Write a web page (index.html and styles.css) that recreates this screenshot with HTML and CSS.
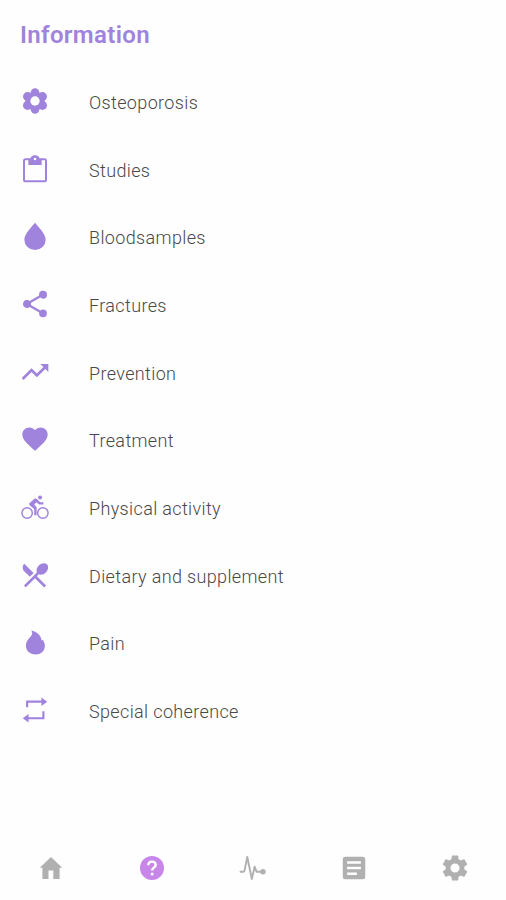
FILE: index.html
```html
<!DOCTYPE html>
<html lang="en">
<head>
  <meta charset="UTF-8" />
  <meta name="viewport" content="width=device-width, initial-scale=1.0">
  <title>Information</title>
  <link rel="stylesheet" href="styles.css">
</head>
<body>

  <main class="content">
    <h1>Information</h1>

    <ul class="menu">
      <li>
        <svg viewBox="0 0 24 24"><circle cx="12" cy="5.600" r="3.200"/><circle cx="17.600" cy="8.700" r="3.400"/><circle cx="17.600" cy="15.300" r="3.400"/><circle cx="12" cy="18.400" r="3.200"/><circle cx="6.400" cy="15.300" r="3.400"/><circle cx="6.400" cy="8.700" r="3.400"/><circle cx="12" cy="12" r="7.200"/><circle class="hole" cx="12" cy="12" r="3.500"/></svg>
        <span>Osteoporosis</span>
      </li>
      <li>
        <svg viewBox="0 0 24 24"><path transform="translate(0 .5)" d="M19 3.500h-3.600A3.500 3.300 0 0 0 12 1.200a3.500 3.300 0 0 0-3.400 2.300H5a2 2 0 0 0-2 2V19.500a2 2 0 0 0 2 2h14a2 2 0 0 0 2-2V5.500a2 2 0 0 0-2-2zm-7-.5a1 1 0 1 1 0 2 1 1 0 0 1 0-2zM19.500 20h-15V5H7v3.500h10V5h2.500z"/></svg>
        <span>Studies</span>
      </li>
      <li>
        <svg viewBox="0 0 24 24"><path d="M12 2C9.200 5.600 4 10.300 4 14.800a8 7.700 0 0 0 16 0C20 10.300 14.800 5.600 12 2z"/></svg>
        <span>Bloodsamples</span>
      </li>
      <li>
        <svg viewBox="0 0 24 24"><path d="M18 16.080c-.76 0-1.440.3-1.960.77L8.910 12.700c.05-.23.090-.46.090-.7s-.040-.47-.090-.7l7.050-4.110c.54.5 1.250.81 2.040.81a3 3 0 1 0-3-3c0 .24.040.47.090.7L8.040 9.810A3 3 0 1 0 6 15c.79 0 1.500-.31 2.040-.81l7.120 4.160c-.050.21-.080.43-.080.65a2.920 2.920 0 1 0 2.920-2.920z"/></svg>
        <span>Fractures</span>
      </li>
      <li>
        <svg viewBox="0 0 24 24"><path d="M16 6l2.290 2.290-4.880 4.880-4-4L2 16.590 3.410 18l6-6 4 4 6.300-6.290L22 12V6z"/></svg>
        <span>Prevention</span>
      </li>
      <li>
        <svg viewBox="0 0 24 24"><path transform="translate(.6 .6) scale(.95)" d="M12 21.350l-1.450-1.320C5.400 15.360 2 12.280 2 8.500 2 5.420 4.420 3 7.500 3c1.740 0 3.410.81 4.500 2.090C13.090 3.810 14.760 3 16.500 3 19.580 3 22 5.420 22 8.500c0 3.780-3.400 6.860-8.550 11.540z"/></svg>
        <span>Treatment</span>
      </li>
      <li>
        <svg viewBox="0 0 24 24"><g class="line"><circle cx="6.100" cy="16.500" r="3.900"/><circle cx="17.900" cy="16.500" r="3.900"/></g><circle cx="15.800" cy="4.900" r="1.500"/><path d="M8 9l3.600-3.100c.6-.5 1.400-.4 1.900.1l2.300 2.400h2.500v1.700h-3.300l-1.900-1.700-1.700 1.800 1.800 2v6h-1.800v-4.700l-3.200-2.600c-.7-.6-.8-1.300-.2-1.900z"/></svg>
        <span>Physical activity</span>
      </li>
      <li>
        <svg viewBox="0 0 24 24"><path d="M8.100 13.340l2.830-2.830L3.910 3.500a4 4 0 0 0 0 5.660zM14.880 11.530c1.530.71 3.680.21 5.270-1.380 1.910-1.910 2.280-4.650.81-6.120-1.460-1.460-4.200-1.100-6.120.81-1.590 1.590-2.090 3.740-1.380 5.270L3.700 19.870l1.410 1.410L12 14.410l6.880 6.880 1.410-1.410L13.410 13z"/></svg>
        <span>Dietary and supplement</span>
      </li>
      <li>
        <svg viewBox="0 0 24 24"><path d="M9.200 2.800c4.600 1 7.400 3.800 7.700 7.400l.9-.4c.9 1.300 1.700 2.900 1.600 4.800-.3 3.900-3.200 6.200-6.800 6.200-4.500 0-7.400-2.500-7.400-6.500 0-3 1.300-4.500 2.900-6.300C9.900 6.100 10.500 4.900 9.200 2.800z" transform="translate(0 .6)"/></svg>
        <span>Pain</span>
      </li>
      <li>
        <svg viewBox="0 0 24 24"><path transform="translate(0 .3)" d="M5.300 9.700V4.600h11.500V2.400l4.400 3.100-4.400 3.200V6.200H6.900v3.500zM19.100 12.600v6.100H7.200V21l-4.400-3.200 4.400-3.100v2.400h10.300v-4.500z"/></svg>
        <span>Special coherence</span>
      </li>
    </ul>
  </main>

  <nav class="tabs">
    <a>
      <svg viewBox="0 0 30 30"><path d="M15 4L3.800 14.700h2.600V26h6.100v-8.500h4.800V26h6.300V14.700h2.600z"/></svg>
    </a>
    <a class="active">
      <svg viewBox="0 0 30 30"><circle cx="15" cy="15" r="12"/><path class="mark" d="M11.300 12.300c0-2.300 1.500-3.700 3.700-3.700s3.700 1.400 3.700 3.300c0 2.600-3.600 2.700-3.600 5.700"/><circle class="hole" cx="15.100" cy="20.900" r="1.500"/></svg>
    </a>
    <a>
      <svg viewBox="0 0 30 30"><path class="pulse" d="M2.500 18.800h2.800c.7 0 1-.3 1.200-1L9.300 4l4.500 22 2.800-12.300 2 5.100h5"/><circle cx="25" cy="18.800" r="2.700"/></svg>
    </a>
    <a>
      <svg viewBox="0 0 24 24"><path fill-rule="evenodd" d="M5 3h14a2 2 0 0 1 2 2v14a2 2 0 0 1-2 2H5a2 2 0 0 1-2-2V5a2 2 0 0 1 2-2zM6.500 6.500v2h11v-2zM6.500 11v2h11v-2zM6.500 15.500v2h7.800v-2z"/></svg>
    </a>
    <a>
      <svg viewBox="0 0 24 24"><path fill-rule="evenodd" d="M19.430 12.980c.04-.32.070-.64.070-.98s-.03-.66-.07-.98l2.110-1.650c.19-.15.24-.42.120-.64l-2-3.460a.5.5 0 0 0-.61-.22l-2.490 1a7.300 7.300 0 0 0-1.690-.98l-.38-2.650A.49.49 0 0 0 14 2h-4a.49.49 0 0 0-.49.420l-.38 2.650c-.61.25-1.170.59-1.690.98l-2.490-1a.49.49 0 0 0-.61.220l-2 3.460c-.13.22-.07.49.120.640l2.110 1.650c-.04.320-.07.650-.07.980s.03.660.070.980l-2.110 1.650a.5.5 0 0 0-.12.640l2 3.460c.12.220.39.300.610.220l2.490-1c.52.400 1.080.730 1.690.980l.38 2.650c.03.240.24.420.490.420h4c.25 0 .46-.18.490-.42l.38-2.650c.61-.25 1.170-.59 1.690-.98l2.490 1c.23.090.49 0 .61-.22l2-3.460a.5.5 0 0 0-.12-.64zM12 15.600a3.600 3.600 0 1 1 0-7.200 3.600 3.600 0 0 1 0 7.200z"/></svg>
    </a>
  </nav>

</body>
</html>
```
FILE: styles.css
```css
body {
  margin: 0;
  height: 900px;
  display: flex;
  flex-direction: column;
  font-family: Roboto, sans-serif;
  background: #fefefe;
  color: #484848;
}
.content {
  flex: 1;
}
h1 {
  margin: 20px 0 0 20px;
  font-size: 24px;
  line-height: 30px;
  font-weight: 600;
  letter-spacing: 0.35px;
  color: #a083dc;
}
.menu {
  margin: 17px 0 0;
  padding: 0;
  list-style: none;
}
.menu li {
  display: flex;
  align-items: center;
  height: 67.7px;
  padding-left: 19px;
  font-size: 18px;
  font-weight: 350;
  letter-spacing: 0.36px;
}
.menu svg {
  width: 32px;
  height: 32px;
  margin-right: 38px;
  fill: #a083dc;
}
.menu span {
  padding-top: 3px;
}
.menu .line {
  fill: none;
  stroke: #a083dc;
  stroke-width: 1.1;
}
svg .hole {
  fill: #fefefe;
}
.tabs {
  display: flex;
  height: 65px;
  border-top: 1px solid #fcfcfc;
}
.tabs a {
  flex: 1;
  display: flex;
  align-items: center;
  justify-content: center;
}
.tabs svg {
  width: 30px;
  height: 30px;
  fill: #b0b0b0;
}
.tabs .active svg {
  fill: #c786e8;
}
.tabs .mark {
  fill: none;
  stroke: #fefefe;
  stroke-width: 2.4;
}
.tabs .pulse {
  fill: none;
  stroke: #b0b0b0;
  stroke-width: 1.9;
  stroke-linejoin: round;
  stroke-linecap: round;
}
```
